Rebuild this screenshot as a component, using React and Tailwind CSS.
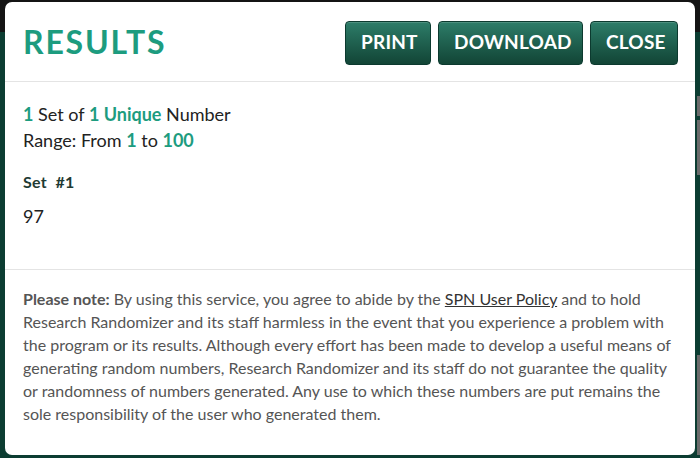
export default function App() {
  const teal = "text-[#1d9c7f]";
  const btn =
    "h-[44px] px-[15px] rounded-[4px] border border-[#0c3a2f] bg-gradient-to-b from-[#2d7d69] to-[#124536] text-white text-[19px] font-bold tracking-[0.2px] shadow-[inset_0_1px_0_rgba(255,255,255,0.15)]";

  return (
    <div
      className="w-[700px] h-[458px] overflow-hidden bg-[#0c3d32] relative"
      style={{ fontFamily: "Lato, 'Open Sans', sans-serif" }}
    >
      <div className="h-[32px] bg-[#141414]" />
      <div className="absolute right-0 top-[96px] w-[3px] h-[20px] bg-[#6b6b6b]" />
      <div className="absolute right-0 top-[120px] w-[3px] h-[55px] bg-[#6b6b6b]" />
      <div className="absolute right-0 top-[355px] w-[3px] h-[100px] bg-[#6b6b6b]" />

      <div className="absolute left-[5px] top-[2px] w-[690px] h-[453px] bg-white rounded-[7px] flex flex-col">
        <div className="h-[80px] flex items-center justify-between pl-[18px] pr-[17px] border-b border-[#e4e4e4]">
          <h1 className={`text-[32px] font-bold tracking-[1.8px] ${teal} mt-[1px]`}>RESULTS</h1>
          <div className="flex gap-[7px] mt-[2px]">
            <button className={`${btn} w-[86px]`}>PRINT</button>
            <button className={`${btn} w-[145px]`}>DOWNLOAD</button>
            <button className={`${btn} w-[88px]`}>CLOSE</button>
          </div>
        </div>

        <div className="h-[188px] px-[18px] pt-[19px] border-b border-[#e4e4e4] text-[#222]">
          <p className="text-[18px] leading-[26px]">
            <span className={`font-bold ${teal}`}>1</span> Set of{" "}
            <span className={`font-bold ${teal}`}>1 Unique</span> Number
          </p>
          <p className="text-[18px] leading-[26px]">
            Range: From <span className={`font-bold ${teal}`}>1</span> to{" "}
            <span className={`font-bold ${teal}`}>100</span>
          </p>
          <p className="mt-[17px] text-[16px] font-bold text-[#1f3b33] tracking-[0.3px]">
            Set&nbsp;&nbsp;#1
          </p>
          <p className="mt-[9px] text-[18px] text-[#222]">97</p>
        </div>

        <div className="pl-[18px] pr-[20px] pt-[17px]">
          <p className="text-[16px] leading-[23px] text-[#555]">
            <b>Please note:</b> By using this service, you agree to abide by the{" "}
            <u className="text-[#333]">SPN User Policy</u> and to hold Research Randomizer and its staff harmless in the
            event that you experience a problem with the program or its results. Although every effort has been made to
            develop a useful means of generating random numbers, Research Randomizer and its staff do not guarantee the
            quality or randomness of numbers generated. Any use to which these numbers are put remains the sole
            responsibility of the user who generated them.
          </p>
        </div>
      </div>
    </div>
  );
}
